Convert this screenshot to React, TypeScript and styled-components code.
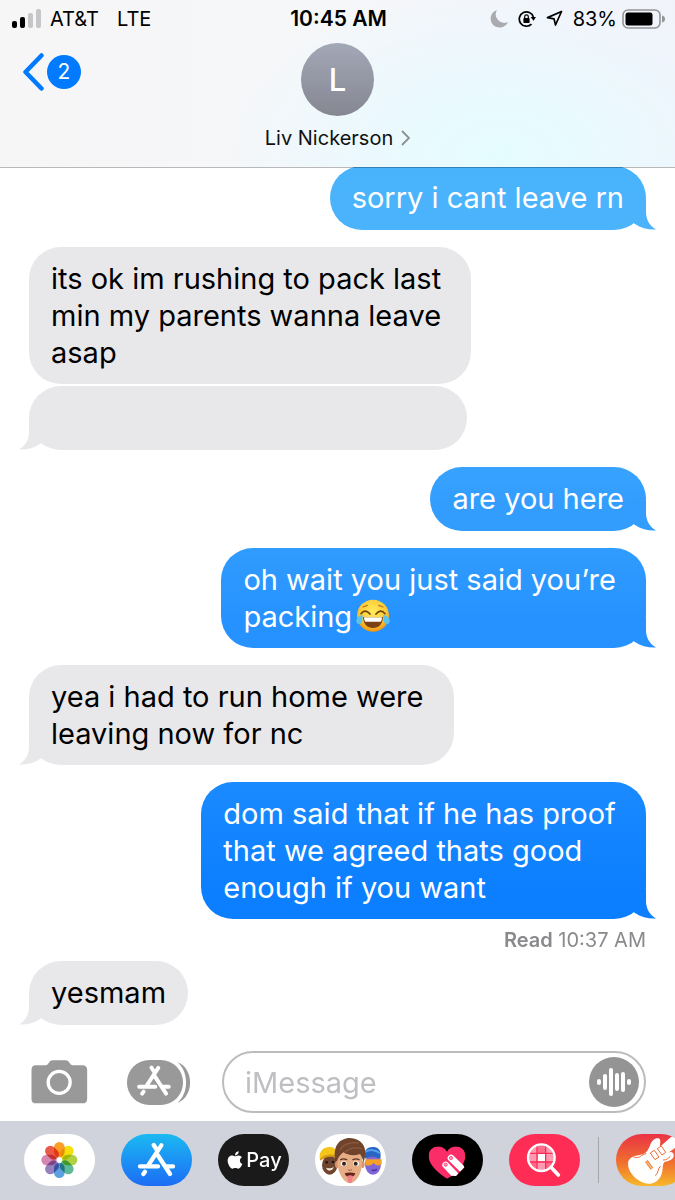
import React from "react";
import styled, { createGlobalStyle } from "styled-components";
import { FaApple } from "react-icons/fa";

const GlobalStyle = createGlobalStyle`
  *, *::before, *::after { box-sizing: border-box; }
  body {
    margin: 0;
    background: #ffffff;
    color: #000000;
    font-family: Inter, "Liberation Sans", sans-serif;
    overflow-x: hidden;
  }
  button, input { font: inherit; }
  svg { display: block; flex: none; }
`;

const Page = styled.div`
  display: flex;
  flex-direction: column;
  min-height: 100vh;
  overflow-x: hidden;
`;

const Header = styled.header`
  position: relative;
  z-index: 1;
  border-bottom: 1px solid rgba(0, 0, 0, 0.28);
  background:
    radial-gradient(ellipse 42% 100% at 74% 92%, #e5fdff 0%, #ebf9fe 45%, rgba(241, 246, 252, 0) 100%) padding-box,
    linear-gradient(90deg, #f6f6f7 0%, #f6f7f9 50%, #f1f3fb 100%) padding-box;
`;

const StatusBar = styled.div`
  display: grid;
  grid-template-columns: 1fr auto 1fr;
  align-items: center;
  height: 37px;
  padding: 0 10px 0 12px;
  font-size: 20px;
  line-height: 24px;
`;

const StatusGroup = styled.div<{ $end?: boolean }>`
  display: flex;
  align-items: center;
  gap: ${(p) => (p.$end ? 10 : 8)}px;
  justify-content: ${(p) => (p.$end ? "flex-end" : "flex-start")};
`;

const Network = styled.span`
  margin-left: 10px;
`;

const Charge = styled.span`
  display: flex;
  align-items: center;
  gap: 5px;
`;

const Clock = styled.time`
  font-size: 21px;
  font-weight: 600;
`;

const NavBar = styled.nav`
  display: grid;
  grid-template-columns: 1fr auto 1fr;
  align-items: start;
  padding: 6px 23px 17px;
`;

const BackButton = styled.button`
  display: flex;
  align-items: center;
  gap: 3px;
  justify-self: start;
  margin-top: 10px;
  padding: 0;
  border: 0;
  background: none;
  color: #007aff;
  cursor: pointer;
`;

const UnreadBadge = styled.span`
  display: grid;
  place-items: center;
  width: 34px;
  height: 34px;
  border-radius: 50%;
  background: #007aff;
  color: #ffffff;
  font-size: 21px;
  line-height: 24px;
`;

const ContactButton = styled.button`
  display: flex;
  flex-direction: column;
  align-items: center;
  gap: 10px;
  padding: 0;
  border: 0;
  background: none;
  color: #111111;
  cursor: pointer;
`;

const Avatar = styled.span`
  display: grid;
  place-items: center;
  width: 73px;
  height: 73px;
  border-radius: 50%;
  background: linear-gradient(#a3a8b7, #858791);
  color: #ffffff;
  font-size: 31px;
  font-weight: 500;
  line-height: 36px;
`;

const ContactName = styled.span`
  display: flex;
  align-items: center;
  gap: 8px;
  font-size: 20px;
  line-height: 24px;
`;

const Thread = styled.main`
  display: flex;
  flex: 1;
  flex-direction: column;
  align-items: flex-start;
  gap: 17px;
  margin-top: -2px;
  padding: 0 29px;
`;

const Stack = styled.div`
  display: flex;
  flex-direction: column;
  align-items: flex-start;
  gap: 2px;
  width: 100%;
`;

const BubbleBox = styled.div<{ $sent?: boolean; $fill: string; $wide?: boolean }>`
  position: relative;
  align-self: ${(p) => (p.$sent ? "flex-end" : "flex-start")};
  width: ${(p) => (p.$wide ? "71%" : "fit-content")};
  max-width: 76%;
  min-height: 64px;
  padding: 13px 22px;
  border-radius: 32px;
  background: ${(p) => p.$fill};
  color: ${(p) => (p.$sent ? "#ffffff" : "#000000")};
  font-size: 29px;
  line-height: 37px;
  white-space: break-spaces;
`;

const TailShape = styled.svg<{ $sent?: boolean }>`
  position: absolute;
  bottom: 0;
  ${(p) => (p.$sent ? "right: -10px;" : "left: -10px; transform: scaleX(-1);")}
`;

const Delivery = styled.div`
  display: flex;
  flex-direction: column;
  align-items: flex-end;
  gap: 10px;
  width: 100%;
  margin-bottom: -7px;
`;

const Receipt = styled.div`
  color: #8a8a8e;
  font-size: 20px;
  line-height: 22px;

  b { font-weight: 600; }
`;

const InlineEmoji = styled.svg`
  && { display: inline-block; }
  margin-left: 4px;
  vertical-align: -6px;
`;

const Composer = styled.form`
  display: flex;
  align-items: center;
  padding: 26px 29px 8px 31px;
`;

const IconButton = styled.button<{ $after: number }>`
  flex: none;
  margin-right: ${(p) => p.$after}px;
  padding: 0;
  border: 0;
  background: none;
  cursor: pointer;
`;

const Field = styled.div`
  display: flex;
  flex: 1;
  align-items: center;
  min-width: 0;
  height: 62px;
  padding: 0 5px 0 21px;
  border: 2px solid #bcbcbe;
  border-radius: 31px;
`;

const MessageInput = styled.input`
  flex: 1;
  min-width: 0;
  padding: 0;
  border: 0;
  outline: 0;
  background: none;
  font-size: 29px;
  line-height: 37px;

  &::placeholder { color: #bfbfc3; opacity: 1; }
`;

const AppStrip = styled.div`
  display: flex;
  gap: 26px;
  padding: 13px 0 14px 24px;
  background: #d0d3db;
  overflow: hidden;
`;

const Shelf = styled.div`
  display: flex;
  flex: none;
  gap: 17px;
  align-items: center;
  margin-left: -8px;
`;

const Divider = styled.span`
  width: 1px;
  height: 46px;
  background: #a4a6ac;
`;

const AppButton = styled.button<{ $fill: string }>`
  display: flex;
  flex: none;
  align-items: center;
  justify-content: center;
  gap: 1px;
  width: 71px;
  height: 52px;
  padding: 0;
  border: 0;
  border-radius: 26px;
  background: ${(p) => p.$fill};
  color: #ffffff;
  font-size: 20px;
  font-weight: 500;
  line-height: 26px;
  overflow: hidden;
  cursor: pointer;
`;

function Tail({ sent, color }: { sent?: boolean; color: string }) {
  return (
    <TailShape $sent={sent} width="34" height="32" viewBox="0 0 34 32" aria-hidden="true">
      <path d="M24 2V14C24 22 28 28 34 31.500C27 32 19 30 13 26L4 20L14 2Z" fill={color} />
    </TailShape>
  );
}

interface BubbleProps {
  sent?: boolean;
  from?: string;
  to?: string;
  tail?: boolean;
  wide?: boolean;
  children?: React.ReactNode;
}

function Bubble({ sent, from = "#e8e8eb", to = from, tail = true, wide, children }: BubbleProps) {
  return (
    <BubbleBox $sent={sent} $wide={wide} $fill={`linear-gradient(${from}, ${to} calc(100% - 30px))`}>
      {tail && <Tail sent={sent} color={to} />}
      {children}
    </BubbleBox>
  );
}

function JoyEmoji() {
  return (
    <InlineEmoji width="34" height="34" viewBox="0 0 102 102" role="img" aria-label="😂">
      <defs>
        <radialGradient id="joy" cx="50%" cy="38%" r="62%">
          <stop offset="0" stopColor="#ffec5e" />
          <stop offset="0.65" stopColor="#fdcb35" />
          <stop offset="1" stopColor="#ee9316" />
        </radialGradient>
      </defs>
      <circle cx="51" cy="50" r="48" fill="url(#joy)" />
      <path d="M21 54H81C80 76 68 87 51 87S22 76 21 54Z" fill="#7b4014" />
      <path d="M24 55H78C78 62 76 67 74 68H28C26 66 24 61 24 55Z" fill="#fff" />
      <path d="M15 44C24 33 33 34 42 45M60 45C69 34 78 33 87 44" fill="none" stroke="#70410f" strokeWidth="5" strokeLinecap="round" />
      <path d="M21 24L34 19M68 19L81 24" stroke="#b9791a" strokeWidth="4" strokeLinecap="round" />
      <path d="M20 48C8 50 0 58 1 68C3 79 17 77 19 66Z" fill="#58c3ee" />
      <path d="M82 48C94 50 102 58 101 68C99 79 85 77 83 66Z" fill="#58c3ee" />
    </InlineEmoji>
  );
}

const StoreGlyph = () => (
  <g fill="none" stroke="#fff" strokeWidth="13" strokeLinecap="round">
    <path d="M121 34L83 92M98 33L107 47M110 63L147 120M57 97H111M137 97H156M72 113L67 120" />
  </g>
);

const petals = ["#f8991d", "#f3df00", "#a9cf38", "#55b590", "#539bdc", "#9179bb", "#d381ae", "#e9503f"];

function PhotosIcon() {
  return (
    <svg width="71" height="52" viewBox="0 0 213 156" aria-hidden="true">
      <g style={{ isolation: "isolate" }}>
        {petals.map((color, i) => (
          <rect
            key={color}
            x="90"
            y="24"
            width="32"
            height="46"
            rx="16"
            fill={color}
            opacity="0.95"
            transform={`rotate(${i * 45} 106 78)`}
            style={{ mixBlendMode: "multiply" }}
          />
        ))}
      </g>
    </svg>
  );
}

function MemojiIcon() {
  return (
    <svg width="71" height="52" viewBox="0 0 213 156" aria-hidden="true">
      <ellipse cx="44" cy="93" rx="23" ry="29" fill="#70452f" />
      <path d="M14 72C13 48 27 38 46 39C60 40 67 51 67 66C47 60 31 64 16 75Z" fill="#f6c51c" />
      <path d="M14 75C29 61 48 58 66 66V73C48 65 31 68 17 80Z" fill="#d69a10" />
      <g fill="#201510"><circle cx="35" cy="85" r="4" /><circle cx="54" cy="84" r="4" /></g>
      <path d="M33 101C41 104 50 103 56 99C54 111 38 114 33 101Z" fill="#f5e9df" />
      <ellipse cx="174" cy="91" rx="24" ry="31" fill="#8065d8" />
      <path d="M148 68C146 43 164 36 181 40C195 44 199 55 196 76C182 66 167 65 151 74Z" fill="#2864c4" />
      <path d="M150 54C165 45 183 47 195 58" fill="none" stroke="#55a0ed" strokeWidth="6" />
      <path d="M151 76H200V91C191 97 181 94 176 86C170 95 158 97 151 92Z" fill="#f4a12a" />
      <path d="M170 108Q178 112 186 106" fill="none" stroke="#4b2f9c" strokeWidth="4" />
      <ellipse cx="66" cy="91" rx="6" ry="11" fill="#d6956f" />
      <ellipse cx="143" cy="91" rx="6" ry="11" fill="#d6956f" />
      <path d="M67 65C69 46 139 45 141 68C145 103 131 144 105 148C79 143 64 103 67 65Z" fill="#e7ad85" />
      <path d="M61 84C55 50 62 26 83 17C105 6 141 14 149 43C153 58 150 72 146 84C143 75 140 66 135 60C115 67 97 63 85 55C76 62 70 69 67 80Z" fill="#70442c" />
      <path d="M75 47C88 28 108 24 129 27M91 54C102 43 119 39 140 44" fill="none" stroke="#8a5a3a" strokeWidth="4" strokeLinecap="round" />
      <path d="M77 77Q85 72 95 77M114 77Q124 72 132 77" fill="none" stroke="#5a351f" strokeWidth="4" strokeLinecap="round" />
      <g fill="#fff"><ellipse cx="86" cy="89" rx="9" ry="7" /><ellipse cx="123" cy="89" rx="9" ry="7" /></g>
      <g fill="#31241f"><circle cx="87" cy="89" r="6" /><circle cx="122" cy="89" r="6" /></g>
      <path d="M99 107Q105 111 111 107" fill="none" stroke="#b87556" strokeWidth="4" />
      <path d="M89 118C98 115 112 115 121 118C118 134 93 135 89 118Z" fill="#68251f" />
      <path d="M97 126Q105 121 114 126L111 143Q105 151 99 143Z" fill="#ef7f88" />
    </svg>
  );
}

function TouchIcon() {
  return (
    <svg width="71" height="52" viewBox="0 0 213 156" aria-hidden="true">
      <defs>
        <clipPath id="heart-clip">
          <path d="M105 134C80 119 50 93 50 67C50 34 90 28 105 53C120 28 160 34 160 67C160 75 157 83 153 90L157 100L132 126L120 125Z" />
        </clipPath>
      </defs>
      <g clipPath="url(#heart-clip)">
        <rect x="45" y="30" width="120" height="110" fill="#fb2d68" />
        <g stroke="#fff" strokeWidth="20" strokeLinecap="round">
          <path d="M101 93L140 134M117 72L160 114" />
        </g>
      </g>
      <g fill="#fb9ab6" stroke="#fb2d68" strokeWidth="2">
        <circle cx="101" cy="92" r="5" />
        <circle cx="117" cy="72" r="5" />
      </g>
    </svg>
  );
}

function ImagesSearchIcon() {
  return (
    <svg width="71" height="52" viewBox="0 0 213 156" aria-hidden="true">
      <circle cx="97" cy="71" r="39" fill="#ff9bb0" />
      <path d="M84 58H110V84H84ZM60 84H84V110L70 102ZM110 84H134L124 102L110 110ZM84 32H110V58H84Z" fill="#ff6a88" />
      <path d="M86 60H108V82H86Z" fill="#fff" />
      <path d="M84 34V108M110 34V108M60 58H134M60 84H134" stroke="#ff2d55" strokeWidth="4" />
      <circle cx="97" cy="71" r="40" fill="none" stroke="#fff" strokeWidth="7" />
      <path d="M126 100L148 123" stroke="#fff" strokeWidth="11" strokeLinecap="round" />
    </svg>
  );
}

function GuitarIcon() {
  return (
    <svg width="71" height="52" viewBox="0 0 213 156" aria-hidden="true">
      <path
        d="M36 88C37 70 55 65 74 62C91 59 96 49 103 32C108 19 119 10 130 14C135 18 132 30 132 38L164 10L213 -18V16L155 58C163 52 171 53 173 62C175 74 160 81 147 83C137 89 143 104 136 122C129 142 108 153 87 148C60 140 35 115 36 88Z"
        fill="#fff"
      />
      <g fill="none" stroke="#ef6b38" strokeWidth="3">
        <path d="M53 69C72 76 76 60 91 59M118 125C128 116 125 103 134 96M103 57L115 49L129 69L117 77ZM124 44L136 36L149 55L138 63ZM141 78C152 79 157 72 163 67" />
      </g>
      <path d="M87 84L95 78L112 101L104 107Z" fill="#f3873a" />
      <path d="M92 83L108 104" stroke="#fff" strokeWidth="2" />
    </svg>
  );
}

export default function App() {
  return (
    <Page>
      <GlobalStyle />
      <Header>
        <StatusBar>
          <StatusGroup>
            <svg width="30" height="20" viewBox="0 0 30 20" aria-hidden="true">
              <rect x="0" y="12" width="5" height="7" rx="2" fill="#000" />
              <rect x="8" y="8" width="5" height="11" rx="2" fill="#000" />
              <rect x="16" y="4" width="5" height="15" rx="2" fill="#c6c6c8" />
              <rect x="24" y="0" width="5" height="19" rx="2" fill="#c6c6c8" />
            </svg>
            <span>AT&amp;T</span>
            <Network>LTE</Network>
          </StatusGroup>
          <Clock>10:45 AM</Clock>
          <StatusGroup $end>
            <svg width="18" height="18" viewBox="0 0 18 18" aria-hidden="true">
              <path d="M7 0A9 9 0 1 0 18 12A8.500 8.500 0 0 1 7 0Z" fill="#aaabae" />
            </svg>
            <svg width="18" height="18" viewBox="0 0 18 18" aria-hidden="true">
              <path d="M15.400 7A7.200 7.200 0 1 0 13.500 14.200" fill="none" stroke="#000" strokeWidth="1.700" />
              <path d="M12.600 7H18L15.500 10.800Z" fill="#000" />
              <rect x="5.400" y="8" width="6.200" height="5" rx="0.700" fill="#000" />
              <path d="M6.700 8V6.600A1.800 1.800 0 0 1 10.300 6.600V8" fill="none" stroke="#000" strokeWidth="1.200" />
            </svg>
            <svg width="17" height="17" viewBox="0 0 17 17" aria-hidden="true">
              <path d="M15.500 1.500L9.500 15L8 8.800L1.500 7.600Z" fill="none" stroke="#000" strokeWidth="1.700" strokeLinejoin="round" />
            </svg>
            <Charge>
              83%
              <svg width="43" height="20" viewBox="0 0 43 20" aria-hidden="true">
                <rect x="1" y="1" width="37" height="18" rx="5" fill="none" stroke="#949497" strokeWidth="1.600" />
                <rect x="3.500" y="3.500" width="27" height="13" rx="2.500" fill="#000" />
                <path d="M40 6.500Q43 7 43 10Q43 13 40 13.500Z" fill="#949497" />
              </svg>
            </Charge>
          </StatusGroup>
        </StatusBar>
        <NavBar>
          <BackButton type="button" aria-label="Back, 2 unread">
            <svg width="21" height="38" viewBox="0 0 21 38" aria-hidden="true">
              <path d="M18.500 2.500L2.500 19L18.500 35.500" fill="none" stroke="#007aff" strokeWidth="4.500" strokeLinecap="round" strokeLinejoin="round" />
            </svg>
            <UnreadBadge>2</UnreadBadge>
          </BackButton>
          <ContactButton type="button">
            <Avatar>L</Avatar>
            <ContactName>
              Liv Nickerson
              <svg width="9" height="16" viewBox="0 0 9 16" aria-hidden="true">
                <path d="M1 1L8 8L1 15" fill="none" stroke="#8b8f92" strokeWidth="1.800" />
              </svg>
            </ContactName>
          </ContactButton>
        </NavBar>
      </Header>

      <Thread>
        <Bubble sent from="#48b3fb" to="#4ab3fc">sorry i cant leave rn</Bubble>
        <Stack>
          <Bubble tail={false}>{"its ok im rushing to pack last \nmin my parents wanna leave \nasap"}</Bubble>
          <Bubble wide />
        </Stack>
        <Bubble sent from="#38a3fe" to="#339dfe">are you here</Bubble>
        <Bubble sent from="#309cfe" to="#2692ff">
          {"oh wait you just said you’re \npacking"}
          <JoyEmoji />
        </Bubble>
        <Bubble>{"yea i had to run home were \nleaving now for nc"}</Bubble>
        <Delivery>
          <Bubble sent from="#1b8aff" to="#0b7fff">
            {"dom said that if he has proof \nthat we agreed thats good \nenough if you want"}
          </Bubble>
          <Receipt>
            <b>Read</b> 10:37 AM
          </Receipt>
        </Delivery>
        <Bubble>yesmam</Bubble>
      </Thread>

      <Composer onSubmit={(e) => e.preventDefault()}>
        <IconButton type="button" $after={39} aria-label="Camera">
          <svg width="57" height="44" viewBox="0 0 170 132" aria-hidden="true">
            <path d="M14 16H44Q50 15 53 8Q57 1 65 1H103Q111 1 115 8Q118 15 124 16H154Q168 16 168 30V116Q168 130 154 130H14Q1 130 1 116V30Q1 16 14 16Z" fill="#999" />
            <circle cx="84" cy="67" r="33" fill="none" stroke="#fff" strokeWidth="10" />
          </svg>
        </IconButton>
        <IconButton type="button" $after={31} aria-label="Apps">
          <svg width="64" height="45" viewBox="0 0 192 135" aria-hidden="true">
            <rect width="168" height="135" rx="67" fill="#999" />
            <path d="M151 6C202 25 202 110 151 129C186 100 186 35 151 6Z" fill="#999" />
            <g transform="translate(-15 -7) scale(0.9)">
              <StoreGlyph />
            </g>
          </svg>
        </IconButton>
        <Field>
          <MessageInput type="text" placeholder="iMessage" aria-label="iMessage" />
          <IconButton type="button" $after={0} aria-label="Record audio">
            <svg width="50" height="50" viewBox="0 0 50 50" aria-hidden="true">
              <circle cx="25" cy="25" r="25" fill="#949494" />
              <path d="M10 24V26M16 19V31M22 13V37M28 18V32M34 17V33M40 24V26" stroke="#fff" strokeWidth="4" strokeLinecap="round" />
            </svg>
          </IconButton>
        </Field>
      </Composer>

      <AppStrip>
        <AppButton type="button" aria-label="Photos" $fill="#ffffff"><PhotosIcon /></AppButton>
        <AppButton type="button" aria-label="App Store" $fill="linear-gradient(#1bb9f2, #1c6cf5)">
          <svg width="71" height="52" viewBox="0 0 213 156" aria-hidden="true"><StoreGlyph /></svg>
        </AppButton>
        <AppButton type="button" $fill="#1a1a1a">
          <FaApple size={20} aria-label="Apple" />
          Pay
        </AppButton>
        <AppButton type="button" aria-label="Memoji" $fill="#ffffff"><MemojiIcon /></AppButton>
        <AppButton type="button" aria-label="Digital Touch" $fill="#000000"><TouchIcon /></AppButton>
        <AppButton type="button" aria-label="Images" $fill="#ff2d55"><ImagesSearchIcon /></AppButton>
        <Shelf>
          <Divider />
          <AppButton type="button" aria-label="GarageBand" $fill="linear-gradient(#ea3345, #f0702f 55%, #f7b82b)"><GuitarIcon /></AppButton>
        </Shelf>
      </AppStrip>
    </Page>
  );
}
